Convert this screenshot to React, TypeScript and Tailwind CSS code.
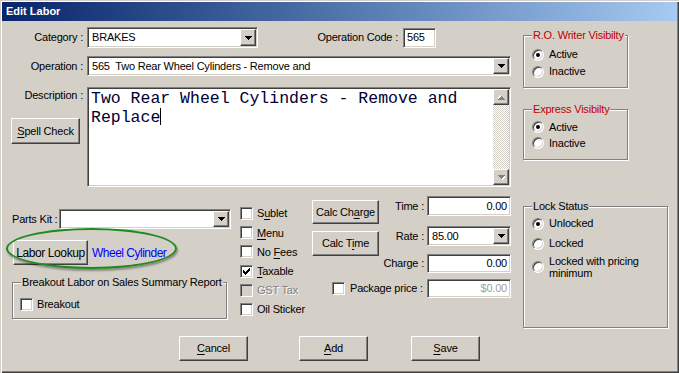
import React from "react";

const sunken =
  "border border-t-[#808080] border-l-[#808080] border-r-white border-b-white shadow-[inset_1px_1px_0_#404040,inset_-1px_-1px_0_#d4d0c8]";
const raised =
  "border border-t-white border-l-white border-r-[#404040] border-b-[#404040] shadow-[inset_-1px_-1px_0_#808080] bg-[#d4d0c8]";

function Tri({ color = "#000" }: { color?: string }) {
  return (
    <svg width="7" height="4" viewBox="0 0 7 4" shapeRendering="crispEdges">
      <rect x="0" y="0" width="7" height="1" fill={color} />
      <rect x="1" y="1" width="5" height="1" fill={color} />
      <rect x="2" y="2" width="3" height="1" fill={color} />
      <rect x="3" y="3" width="1" height="1" fill={color} />
    </svg>
  );
}

function Combo({ className, text }: { className: string; text?: string }) {
  return (
    <div className={`${sunken} bg-white flex p-[1px] ${className}`}>
      <div className="flex-1 flex items-center pl-[3px] whitespace-pre overflow-hidden">{text}</div>
      <div className={`${raised} w-[16px] flex items-center justify-center`}>
        <Tri />
      </div>
    </div>
  );
}

function Check({ checked, disabled }: { checked?: boolean; disabled?: boolean }) {
  return (
    <div
      className={`${sunken} w-[13px] h-[13px] shrink-0 flex items-center justify-center ${
        disabled ? "bg-[#d4d0c8]" : "bg-white"
      }`}
    >
      {checked && (
        <svg width="7" height="7" viewBox="0 0 7 7" shapeRendering="crispEdges">
          <path d="M0 2h1v1h1v1h1v-1h1v-1h1v-1h1v-1h1v3h-1v1h-1v1h-1v1h-1v1h-1v-1h-1v-1h-1z" fill="#000" />
        </svg>
      )}
    </div>
  );
}

function Radio({ checked }: { checked?: boolean }) {
  return (
    <div className="w-[12px] h-[12px] shrink-0 rounded-full bg-white border border-t-[#808080] border-l-[#808080] border-r-white border-b-white shadow-[inset_1px_1px_0_#404040,inset_-1px_-1px_0_#d4d0c8] flex items-center justify-center">
      {checked && <div className="w-[4px] h-[4px] rounded-full bg-black" />}
    </div>
  );
}

function Group({
  legend,
  red,
  className,
  children,
}: {
  legend: string;
  red?: boolean;
  className: string;
  children?: React.ReactNode;
}) {
  return (
    <div className={`relative border border-[#808080] shadow-[inset_1px_1px_0_#fff,1px_1px_0_#fff] ${className}`}>
      <span
        className={`absolute -top-[7px] left-[8px] px-[1px] bg-[#d4d0c8] leading-[13px] whitespace-nowrap ${
          red ? "text-[#c00000]" : "text-black"
        }`}
      >
        {legend}
      </span>
      {children}
    </div>
  );
}

function Btn({ className, children }: { className: string; children: React.ReactNode }) {
  return <div className={`${raised} flex items-center justify-center ${className}`}>{children}</div>;
}

function ScrollArrow({ up }: { up?: boolean }) {
  return (
    <div className={`${raised} w-[16px] h-[16px] flex items-center justify-center`}>
      <div className={up ? "rotate-180" : ""}>
        <svg width="7" height="5" viewBox="0 0 7 5" shapeRendering="crispEdges">
          <rect x="1" y="1" width="7" height="1" fill="#fff" />
          <rect x="2" y="2" width="5" height="1" fill="#fff" />
          <rect x="3" y="3" width="3" height="1" fill="#fff" />
          <rect x="4" y="4" width="1" height="1" fill="#fff" />
          <rect x="0" y="0" width="7" height="1" fill="#808080" />
          <rect x="1" y="1" width="5" height="1" fill="#808080" />
          <rect x="2" y="2" width="3" height="1" fill="#808080" />
          <rect x="3" y="3" width="1" height="1" fill="#808080" />
        </svg>
      </div>
    </div>
  );
}

export default function App() {
  return (
    <div className="w-[679px] h-[373px] bg-[#d4d0c8] overflow-hidden flex flex-col font-['Liberation_Sans',Arial,sans-serif] text-[11px] tracking-[-0.2px] text-black shadow-[inset_1px_1px_0_#d4d0c8,inset_2px_2px_0_#fff,inset_-1px_-1px_0_#404040,inset_-2px_-2px_0_#808080]">
      {/* Title bar */}
      <div className="mt-[2px] mx-[2px] h-[19px] shrink-0 bg-gradient-to-r from-[#0a246a] to-[#a6caf0] flex items-center pl-[4px]">
        <span className="text-white font-bold text-[11px] tracking-normal">Edit Labor</span>
      </div>

      <div className="flex flex-1">
        {/* Left part */}
        <div className="w-[515px] flex flex-col">
          {/* Row 1 */}
          <div className="mt-[6px] h-[21px] flex items-center">
            <span className="w-[83px] text-right">Category :</span>
            <Combo className="ml-[4px] w-[171px] h-[21px]" text="BRAKES" />
            <span className="w-[140px] text-right">Operation Code :</span>
            <div className={`${sunken} bg-white ml-[5px] w-[33px] h-[20px] flex items-center pl-[3px]`}>565</div>
          </div>

          {/* Row 2 */}
          <div className="mt-[8px] h-[20px] flex items-center">
            <span className="w-[83px] text-right">Operation :</span>
            <Combo className="ml-[4px] w-[424px] h-[20px]" text="565  Two Rear Wheel Cylinders - Remove and" />
          </div>

          {/* Row 3 */}
          <div className="mt-[11px] flex">
            <div className="w-[87px] flex flex-col">
              <span className="w-[83px] text-right leading-[14px] mt-[1px]">Description :</span>
              <Btn className="ml-[11px] mt-[16px] w-[69px] h-[26px]">
                <span>
                  <u className="underline-offset-[2px]">S</u>pell Check
                </span>
              </Btn>
            </div>
            <div className={`${sunken} bg-white w-[424px] h-[100px] flex p-[1px]`}>
              <div className="flex-1 pl-[2px] pt-[1px] font-['Liberation_Mono','Courier_New',monospace] text-[16.5px] leading-[18px] tracking-normal text-[#000033] whitespace-pre">
                {"Two Rear Wheel Cylinders - Remove and\nReplace"}
                <span className="inline-block w-[1px] h-[17px] bg-black align-[-3px]" />
              </div>
              <div className="w-[16px] flex flex-col">
                <ScrollArrow up />
                <div className="flex-1 bg-[image:repeating-conic-gradient(#ffffff_0_25%,#d4d0c8_0_50%)] bg-size-[2px_2px]" />
                <ScrollArrow />
              </div>
            </div>
          </div>

          {/* Row 4 */}
          <div className="h-[132px] flex">
            {/* Col A */}
            <div className="w-[239px] relative flex flex-col">
              <div className="mt-[22px] h-[20px] flex items-center pl-[12px]">
                <span className="w-[47px]">Parts Kit :</span>
                <Combo className="w-[172px] h-[20px]" />
              </div>
              <div className="mt-[11px] h-[25px] flex items-center">
                <Btn className="ml-[13px] w-[75px] h-[25px]">
                  <span className="text-[12px] tracking-[-0.4px]">Labor Lookup</span>
                </Btn>
                <span className="ml-[4px] text-[#0000ff] text-[12px] tracking-[-0.5px]">Wheel Cylinder</span>
              </div>
              <div className="absolute left-[6px] top-[41px] w-[171px] h-[41px] rounded-[50%] border-2 border-[#1f8a1f] shadow-[1px_2px_2px_rgba(0,0,0,0.35)]" />
              <Group legend="Breakout Labor on Sales Summary Report" className="mt-[17px] ml-[12px] w-[215px] h-[38px]">
                <div className="pt-[13px] pl-[7px] flex items-center">
                  <Check />
                  <span className="ml-[4px]">Breakout</span>
                </div>
              </Group>
            </div>

            {/* Col B */}
            <div className="w-[72px] pt-[17px] flex flex-col">
              {[
                { l: "S", u: "u", r: "blet" },
                { l: "", u: "M", r: "enu" },
                { l: "No ", u: "F", r: "ees" },
                { l: "", u: "T", r: "axable", checked: true },
                { l: "GST Tax", u: "", r: "", disabled: true },
                { l: "Oil Sticker", u: "", r: "" },
              ].map((c, i) => (
                <div key={i} className="h-[19.5px] flex items-center pl-[1px]">
                  <Check checked={c.checked} disabled={c.disabled} />
                  <span
                    className={`ml-[4px] whitespace-pre ${
                      c.disabled ? "text-[#808080] [text-shadow:1px_1px_0_#fff]" : ""
                    }`}
                  >
                    {c.l}
                    {c.u && <u className="underline-offset-[2px]">{c.u}</u>}
                    {c.r}
                  </span>
                </div>
              ))}
            </div>

            {/* Col C */}
            <div className="w-[200px] flex flex-col">
              <div className="flex">
                <div className="w-[68px] flex flex-col pl-[1px]">
                  <Btn className="mt-[13px] w-[67px] h-[24px]">
                    <span>
                      Calc Ch<u className="underline-offset-[2px]">a</u>rge
                    </span>
                  </Btn>
                  <Btn className="mt-[7px] w-[67px] h-[25px]">
                    <span>
                      Calc T<u className="underline-offset-[2px]">i</u>me
                    </span>
                  </Btn>
                </div>
                <div className="flex-1 flex flex-col">
                  <div className="mt-[9px] h-[20px] flex items-center justify-end">
                    <span>Time :</span>
                    <div className={`${sunken} bg-white ml-[3px] w-[84px] h-[20px] flex items-center justify-end pr-[3px]`}>0.00</div>
                  </div>
                  <div className="mt-[10px] h-[20px] flex items-center justify-end">
                    <span>Rate :</span>
                    <Combo className="ml-[3px] w-[84px] h-[20px]" text="85.00" />
                  </div>
                  <div className="mt-[8px] h-[19px] flex items-center justify-end">
                    <span>Charge :</span>
                    <div className={`${sunken} bg-white ml-[3px] w-[84px] h-[19px] flex items-center justify-end pr-[3px]`}>0.00</div>
                  </div>
                </div>
              </div>
              <div className="mt-[6px] h-[19px] flex items-center">
                <div className="ml-[21px]">
                  <Check />
                </div>
                <span className="ml-[5px]">Package price :</span>
                <div className={`${sunken} bg-white ml-auto w-[84px] h-[19px] flex items-center justify-end pr-[3px] text-[#a0a0a0]`}>
                  $0.00
                </div>
              </div>
            </div>
          </div>

          {/* Row 5 buttons */}
          <div className="mt-[17px] flex">
            <Btn className="ml-[179px] w-[69px] h-[25px]">
              <span>
                <u className="underline-offset-[2px]">C</u>ancel
              </span>
            </Btn>
            <Btn className="ml-[51px] w-[69px] h-[25px]">
              <span>
                <u className="underline-offset-[2px]">A</u>dd
              </span>
            </Btn>
            <Btn className="ml-[43px] w-[69px] h-[25px]">
              <span>
                <u className="underline-offset-[2px]">S</u>ave
              </span>
            </Btn>
          </div>
        </div>

        {/* Right column */}
        <div className="flex-1 flex flex-col pl-[8px]">
          <Group legend="R.O. Writer Visibilty" red className="mt-[14px] w-[105px] h-[53px]">
            <div className="pt-[10px] pl-[8px] flex flex-col">
              <div className="h-[17px] flex items-center">
                <Radio checked />
                <span className="ml-[5px]">Active</span>
              </div>
              <div className="h-[17px] flex items-center">
                <Radio />
                <span className="ml-[5px]">Inactive</span>
              </div>
            </div>
          </Group>
          <Group legend="Express Visibilty" red className="mt-[21px] w-[105px] h-[51px]">
            <div className="pt-[9px] pl-[8px] flex flex-col">
              <div className="h-[16px] flex items-center">
                <Radio checked />
                <span className="ml-[5px]">Active</span>
              </div>
              <div className="h-[16px] flex items-center">
                <Radio />
                <span className="ml-[5px]">Inactive</span>
              </div>
            </div>
          </Group>
          <Group legend="Lock Status" className="mt-[46px] w-[145px] h-[122px]">
            <div className="pt-[8px] pl-[8px] flex flex-col">
              <div className="h-[17px] flex items-center">
                <Radio checked />
                <span className="ml-[5px]">Unlocked</span>
              </div>
              <div className="mt-[3px] h-[17px] flex items-center">
                <Radio />
                <span className="ml-[5px]">Locked</span>
              </div>
              <div className="mt-[3px] flex items-center">
                <Radio />
                <span className="ml-[5px] leading-[12px]">
                  Locked with pricing
                  <br />
                  minimum
                </span>
              </div>
            </div>
          </Group>
        </div>
      </div>
    </div>
  );
}
